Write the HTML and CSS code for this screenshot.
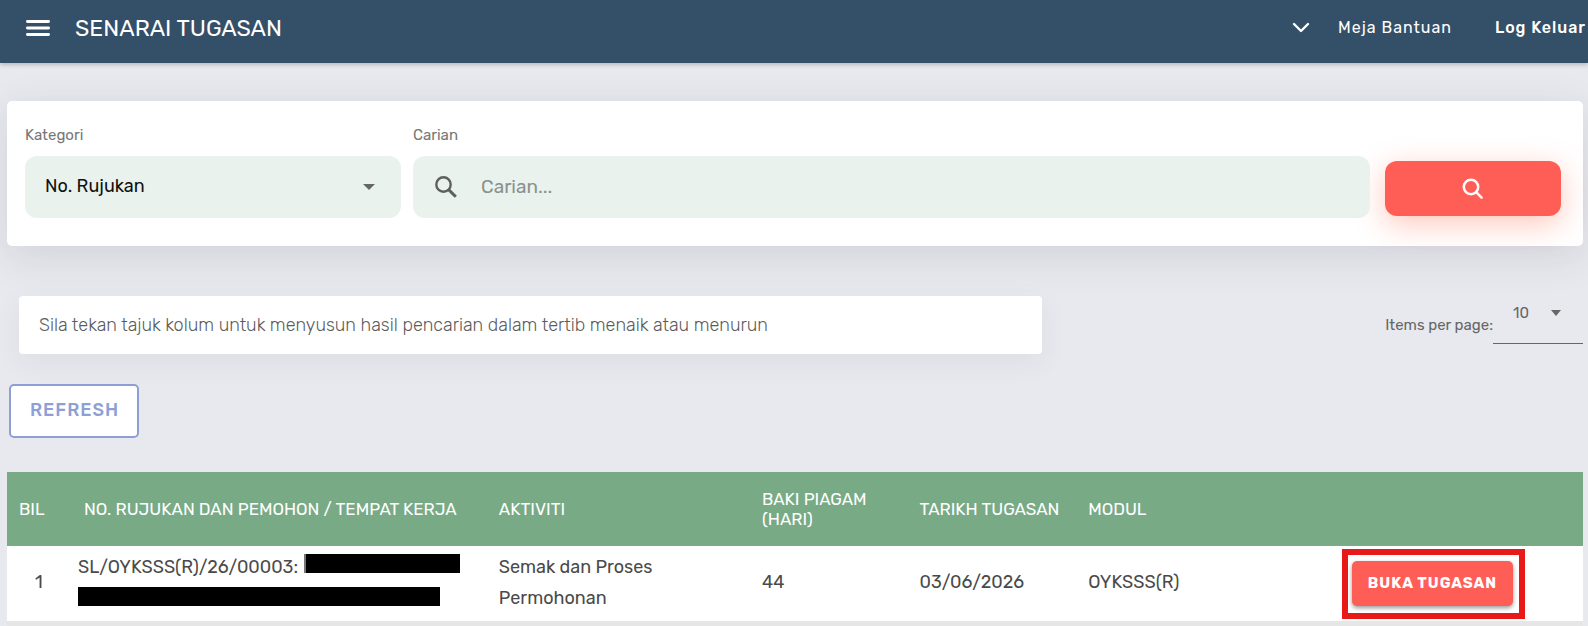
FILE: index.html
```html
<!DOCTYPE html>
<html lang="ms">
<head>
    <meta charset="UTF-8">
    <meta name="viewport" content="width=device-width, initial-scale=1">
    <title>Senarai Tugasan</title>
    <link rel="stylesheet" href="styles.css">
</head>
<body>
    <header class="topbar">
        <button type="button" class="menu-btn" aria-label="Menu">
            <svg width="24" height="16" viewBox="0 0 24 16" fill="none" stroke="currentColor" stroke-width="2.8" stroke-linecap="round">
                <path d="M1.4 1.5h21.2M1.4 8h21.2M1.4 14.5h21.2"/>
            </svg>
        </button>
        <h1>SENARAI TUGASAN</h1>
        <nav class="topnav">
            <button type="button" class="menu-btn" aria-label="Lagi">
                <svg width="18" height="12" viewBox="0 0 18 12" fill="none" stroke="currentColor" stroke-width="2.4" stroke-linecap="round" stroke-linejoin="round">
                    <path d="M2 2l7 7 7-7"/>
                </svg>
            </button>
            <a href="#" class="help">Meja Bantuan</a>
            <a href="#" class="logout">Log Keluar</a>
        </nav>
    </header>

    <main>
        <form class="search-card">
            <div class="field category">
                <label for="kategori">Kategori</label>
                <div class="control">
                    <select id="kategori">
                        <option>No. Rujukan</option>
                    </select>
                    <svg class="arrow" width="12" height="6" viewBox="0 0 12 6"><path d="M0 0h12L6 6z" fill="currentColor"/></svg>
                </div>
            </div>
            <div class="field term">
                <label for="carian">Carian</label>
                <div class="control">
                    <svg class="lens" width="22" height="22" viewBox="0 0 22 22" fill="none" stroke="currentColor">
                        <circle cx="8.5" cy="8.5" r="7.2" stroke-width="2.4"/>
                        <path d="M13.6 13.6l7.2 7.2" stroke-width="3"/>
                    </svg>
                    <input type="text" id="carian" placeholder="Carian...">
                </div>
            </div>
            <button type="submit" class="search-btn" aria-label="Cari">
                <svg width="22" height="22" viewBox="0 0 22 22" fill="none" stroke="currentColor" stroke-width="2.5" stroke-linecap="round">
                    <circle cx="9" cy="9" r="7.2"/>
                    <path d="M14.4 14.4l5.2 5.2"/>
                </svg>
            </button>
        </form>

        <div class="list-info">
            <p class="note">Sila tekan tajuk kolum untuk menyusun hasil pencarian dalam tertib menaik atau menurun</p>
            <div class="pager">
                <label for="perPage">Items per page:</label>
                <div class="page-size">
                    <select id="perPage">
                        <option>10</option>
                    </select>
                    <svg class="arrow" width="10" height="6" viewBox="0 0 10 6"><path d="M0 0h10L5 6z" fill="currentColor"/></svg>
                </div>
            </div>
        </div>

        <button type="button" class="refresh-btn">REFRESH</button>

        <table class="tasks">
            <colgroup>
                <col class="col-bil">
                <col class="col-ref">
                <col class="col-activity">
                <col class="col-days">
                <col class="col-date">
                <col class="col-module">
                <col>
            </colgroup>
            <thead>
                <tr>
                    <th class="bil">BIL</th>
                    <th class="ref">NO. RUJUKAN DAN PEMOHON / TEMPAT KERJA</th>
                    <th>AKTIVITI</th>
                    <th>BAKI PIAGAM (HARI)</th>
                    <th>TARIKH TUGASAN</th>
                    <th>MODUL</th>
                    <th></th>
                </tr>
            </thead>
            <tbody>
                <tr>
                    <td class="bil">1</td>
                    <td>
                        <div class="ref-line">SL/OYKSSS(R)/26/00003: <span class="redacted name"></span></div>
                        <div class="ref-line"><span class="redacted place"></span></div>
                    </td>
                    <td>Semak dan Proses<br>Permohonan</td>
                    <td>44</td>
                    <td>03/06/2026</td>
                    <td>OYKSSS(R)</td>
                    <td class="action">
                        <div class="highlight">
                            <button type="button" class="open-btn">BUKA TUGASAN</button>
                        </div>
                    </td>
                </tr>
            </tbody>
        </table>
        <div class="table-end"></div>
    </main>
</body>
</html>
```

FILE: styles.css
```css
* {
    box-sizing: border-box;
}

body {
    margin: 0;
    min-height: 100vh;
    display: flex;
    flex-direction: column;
    background: #e8e9ee;
    color: #4a4a4a;
    font-family: Rubik, Roboto, sans-serif;
    font-size: 18px;
}

button,
input,
select {
    font-family: inherit;
    cursor: pointer;
}

/* Top bar */
.topbar {
    display: flex;
    align-items: center;
    height: 63px;
    padding: 0 2px 8px 26px;
    background: #345068;
    color: #fff;
    box-shadow: 0 2px 4px rgba(0, 0, 0, 0.2);
}

.topbar h1 {
    margin: 0 0 0 25px;
    font-size: 23px;
    font-weight: 400;
}

.menu-btn {
    display: flex;
    padding: 0;
    border: none;
    background: none;
    color: #fff;
}

.topnav {
    display: flex;
    align-items: center;
    margin-left: auto;
    font-size: 16px;
    letter-spacing: 1px;
}

.topnav a {
    color: #fff;
    text-decoration: none;
}

.help {
    margin: 0 43px 0 28px;
}

.logout {
    font-weight: 500;
}

main {
    flex: 1;
    display: flex;
    flex-direction: column;
    padding: 38px 5px 0 7px;
}

/* Search card */
.search-card {
    display: flex;
    align-items: flex-end;
    padding: 24px 22px 28px 18px;
    background: #fff;
    border-radius: 5px;
    box-shadow: 0 10px 40px rgba(50, 50, 80, 0.12);
}

.field label {
    display: block;
    margin-bottom: 11px;
    color: #777;
    font-size: 15px;
    line-height: 20px;
}

.category {
    width: 25%;
    max-width: 376px;
    margin-right: 12px;
}

.term {
    flex: 1;
    margin-right: 15px;
}

.control {
    display: flex;
    align-items: center;
    position: relative;
    height: 62px;
    background: #e9f2ed;
    border-radius: 12px;
}

.control select,
.page-size select {
    appearance: none;
    width: 100%;
    border: none;
    background: none;
}

.control select {
    height: 100%;
    padding: 0 50px 2px 20px;
    color: #111;
    font-size: 18px;
}

.arrow {
    position: absolute;
    right: 26px;
    color: #666;
    pointer-events: none;
}

.lens {
    margin-left: 22px;
    color: #5d605e;
}

.control input {
    flex: 1;
    height: 100%;
    margin-left: 24px;
    padding: 0 0 2px;
    border: none;
    outline: none;
    background: none;
    font-size: 19px;
}

.control input::placeholder {
    color: #8b918e;
}

.search-btn {
    display: flex;
    align-items: center;
    justify-content: center;
    width: 176px;
    height: 55px;
    margin-bottom: 2px;
    border: none;
    border-radius: 12px;
    background: #ff5e57;
    color: #fff;
    box-shadow: 0 8px 30px rgba(255, 94, 60, 0.35);
}

/* Note and page size */
.list-info {
    display: flex;
    align-items: flex-start;
    justify-content: space-between;
    margin: 50px 0 30px 12px;
}

.note {
    width: 65.4%;
    margin: 0;
    padding: 18px 20px;
    background: #fff;
    border-radius: 4px;
    color: #5c5c5c;
    font-weight: 300;
    line-height: 22px;
    box-shadow: 0 8px 30px rgba(50, 50, 60, 0.06);
}

.pager {
    display: flex;
    align-items: center;
    color: #666;
    font-size: 15px;
}

.pager label {
    padding-top: 10px;
}

.page-size {
    position: relative;
    width: 90px;
    height: 48px;
    border-bottom: 1px solid #666;
}

.page-size select {
    height: 34px;
    padding: 0 30px 0 20px;
    color: #666;
    font-size: 15px;
}

.page-size .arrow {
    top: 14px;
    right: 22px;
}

.refresh-btn {
    align-self: flex-start;
    height: 54px;
    margin: 0 0 34px 2px;
    padding: 0 18px 2px 19px;
    border: 2px solid #8d9fd6;
    border-radius: 5px;
    background: #fff;
    color: #8d9fd6;
    font-size: 18px;
    font-weight: 500;
    letter-spacing: 1px;
}

/* Task table */
.tasks {
    width: 100%;
    table-layout: fixed;
    border-collapse: collapse;
    background: #fff;
}

.col-bil {
    width: 4%;
}

.col-ref {
    width: 26.7%;
}

.col-activity {
    width: 16.7%;
}

.col-days {
    width: 10%;
}

.col-date {
    width: 10.7%;
}

.col-module {
    width: 16.1%;
}

.tasks th {
    height: 74px;
    padding: 0 8px;
    background: #79aa86;
    color: #fff;
    font-size: 17px;
    font-weight: 400;
    line-height: 20px;
    text-align: left;
}

.tasks th.bil {
    padding-left: 12px;
}

.tasks th.ref {
    padding-left: 14px;
}

.tasks td {
    height: 75px;
    padding: 0 8px 2px;
    line-height: 31px;
}

.tasks td.bil {
    padding-left: 28px;
}

.ref-line {
    display: flex;
    height: 31px;
}

.redacted {
    height: 19px;
    background: #000;
}

.name {
    width: 156px;
    margin: 2px 0 0 6px;
    border-left: 2px solid #777;
}

.place {
    width: 362px;
    margin-top: 4px;
}

.tasks td.action {
    padding: 0 8px;
}

.highlight {
    display: flex;
    width: 183px;
    height: 70px;
    padding: 6px 6px 7px 4px;
    border: 6px solid #e81919;
}

.open-btn {
    flex: 1;
    padding: 0;
    border: none;
    border-radius: 5px;
    background: #ff5e57;
    color: #fff;
    font-size: 15px;
    font-weight: 700;
    letter-spacing: 1px;
    box-shadow: 0 2px 4px rgba(0, 0, 0, 0.4);
}

.table-end {
    flex: 1;
    background: #e6e6e6;
}
```
